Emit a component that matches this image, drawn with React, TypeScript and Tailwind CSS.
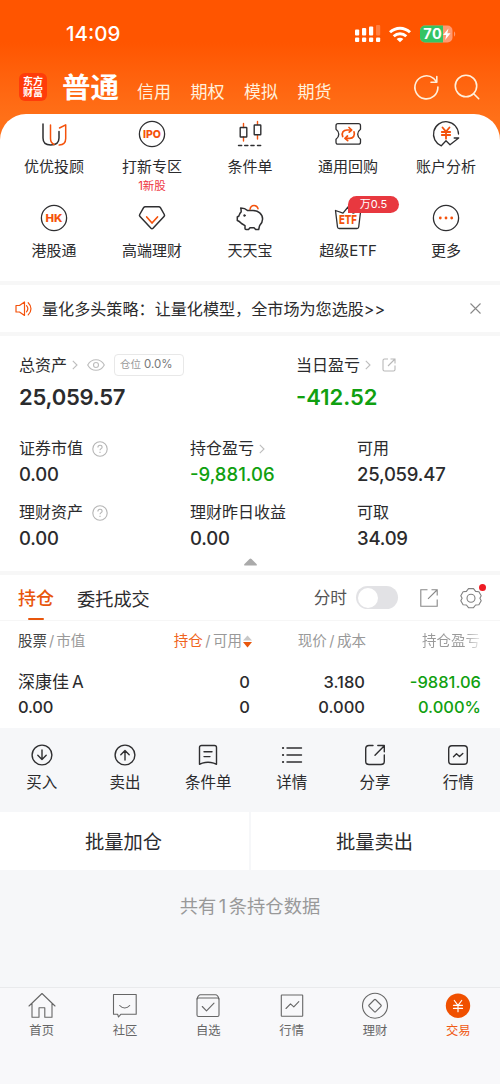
import type { ReactNode } from 'react'

const ORANGE = '#f4520c'
const DARK = '#2f2f31'

function Icon({ size = 28, sw = 1.3, color = DARK, children }: { size?: number; sw?: number; color?: string; children: ReactNode }) {
  return (
    <svg
      width={size}
      height={size}
      viewBox={`0 0 ${size} ${size}`}
      fill="none"
      stroke={color}
      strokeWidth={sw}
      strokeLinecap="round"
      strokeLinejoin="round"
      className="shrink-0 overflow-visible"
    >
      {children}
    </svg>
  )
}

function Chevron() {
  return (
    <svg width="6" height="10" viewBox="0 0 6 10" fill="none" stroke="#bdbdbd" strokeWidth="1.1" className="shrink-0">
      <path d="M.8 .8 5 5 .8 9.2" />
    </svg>
  )
}

function Help() {
  return (
    <svg width="16" height="16" viewBox="0 0 16 16" fill="none" stroke="#b5b5b5" strokeWidth="1.1" className="shrink-0">
      <circle cx="8" cy="8" r="7.2" />
      <path d="M5.9 6.4c0-1.3.9-2.1 2.1-2.1s2.1.8 2.1 1.9c0 1.4-2.1 1.5-2.1 3.1M8 10.7v1.2" />
    </svg>
  )
}

const glyph = { fontFamily: 'Inter, sans-serif', textAnchor: 'middle' as const, fill: ORANGE, stroke: 'none' }

const shortcuts = [
  {
    label: '优优投顾',
    icon: (
      <Icon sw={1.5}>
        <path d="M3 4v14c0 4.500 2.700 7 7.700 7 5 0 8.300-2.500 8.300-7v-6.500" />
        <path d="M10.500 5v13.500c0 3 1.300 4.800 3.500 6M19.500 8l6.200-3.200V18.500c0 4-2.600 6.300-6.500 6.600" stroke={ORANGE} />
      </Icon>
    ),
  },
  {
    label: '打新专区',
    note: '1新股',
    icon: (
      <Icon>
        <circle cx="14" cy="14" r="12.600" />
        <text x="14" y="18" fontSize="11" fontWeight="800" textLength="18" lengthAdjust="spacingAndGlyphs" {...glyph}>IPO</text>
      </Icon>
    ),
  },
  {
    label: '条件单',
    icon: (
      <Icon sw={1.4}>
        <path d="M7.500 3.500v4M7.500 17v4M21.500 1.500v3M21.500 15v4" stroke={ORANGE} />
        <rect x="4.200" y="7.500" width="6.600" height="9.500" rx=".5" />
        <rect x="18.200" y="5" width="6.600" height="9.800" rx=".5" />
        <path d="M2.500 25.500h3.200M8.700 25.500h3.200M14.900 25.500h3.200M21.500 25.500h3.200" />
      </Icon>
    ),
  },
  {
    label: '通用回购',
    icon: (
      <Icon>
        <path d="M4 3.700h20.500c1.300 0 2 .7 2 2v3.500c-2 1.500-2.800 3-2.800 5s.8 3.500 2.800 5v3c0 1.300-.7 2-2 2H4c-1.300 0-2-.7-2-2v-3c2-1.500 2.800-3 2.800-5S4 10.700 2 9.200V5.700c0-1.300.7-2 2-2Z" />
        <g stroke={ORANGE} strokeWidth="1.700">
          <path d="M8.700 16.500c-1.500-3.700.8-6.500 4.300-6.500h4M20 11.800c1.300 3.700-.8 6.500-4.300 6.500h-4.200" />
          <path d="m15 7.500 2.700 2.500-2.500 2.200M13.500 16l-2.500 2.300 2.700 2.400" />
        </g>
      </Icon>
    ),
  },
  {
    label: '账户分析',
    icon: (
      <Icon>
        <path d="M26.500 14A12.500 12.500 0 1 0 9.300 25.800l4.700-5 4 4L26.700 18h-4.500" />
        <path d="m10.500 7.500 3.500 4.200 3.500-4.200M14 11.700v7M9.800 12h8.400M9.800 15h8.400" stroke={ORANGE} strokeWidth="1.800" />
      </Icon>
    ),
  },
  {
    label: '港股通',
    icon: (
      <Icon>
        <circle cx="14" cy="14" r="12.600" />
        <text x="14" y="18" fontSize="11" fontWeight="800" textLength="17" lengthAdjust="spacingAndGlyphs" {...glyph}>HK</text>
      </Icon>
    ),
  },
  {
    label: '高端理财',
    icon: (
      <Icon sw={1.500}>
        <path d="M7.300 2.800h13.400c.7 0 1.300.3 1.700.9l3.900 6.800c.4.700.3 1.400-.3 2L15 24.300c-.6.6-1.400.6-2 0L2 12.500c-.6-.6-.7-1.300-.3-2l3.900-6.800c.4-.6 1-.9 1.700-.9Z" />
        <path d="m8.700 13 5.300 6 5.500-6" stroke={ORANGE} strokeWidth="1.700" />
      </Icon>
    ),
  },
  {
    label: '天天宝',
    icon: (
      <Icon sw={1.500}>
        <path d="M11.500 6.500C9.500 4.500 7.200 4 4.700 4c.5 1.300.4 2.500.5 3.800C3.700 9 3.400 10.500 2.900 12L1.300 13v3.500c1.700.5 2.800 1.500 4.200 3L9 21.700V24.500c0 .7.400 1 1 1h2.500l1.500-1.800h4l1.700 1.800h3c.5-1.500.5-3 1-4 1.800-2 2.900-4 2.900-6.500 0-5-4.400-8.500-9.600-8.500Z" />
        <path d="M14 5.500C14.500 2.300 16.300 1.500 18 1.500c2 0 3.600 1.200 4 3.200" stroke={ORANGE} />
        <circle cx="8.500" cy="11.500" r="1" fill={DARK} strokeWidth=".5" />
      </Icon>
    ),
  },
  {
    label: '超级ETF',
    badge: '万0.5',
    icon: (
      <Icon>
        <path d="m1.500 6.500 7.500 2.700L14 3l5 6.200 7.700-2.700-2 16.500c-.1 1-.7 1.500-1.700 1.500H5.200c-1 0-1.600-.5-1.700-1.500Z" />
        <text x="14" y="20.300" fontSize="12" fontWeight="800" textLength="18" lengthAdjust="spacingAndGlyphs" {...glyph}>ETF</text>
      </Icon>
    ),
  },
  {
    label: '更多',
    icon: (
      <Icon>
        <circle cx="14" cy="14" r="12.600" />
        <g fill={ORANGE} stroke="none">
          <circle cx="8.300" cy="14" r="1.400" />
          <circle cx="14" cy="14" r="1.400" />
          <circle cx="19.700" cy="14" r="1.400" />
        </g>
      </Icon>
    ),
  },
]

const actions = [
  { label: '买入', icon: <><circle cx="11" cy="11" r="9.900" /><path d="M11 6v9.500M6.800 11.300 11 15.500l4.200-4.200" /></> },
  { label: '卖出', icon: <><circle cx="11" cy="11" r="9.900" /><path d="M11 16V6.500M6.800 10.700 11 6.500l4.200 4.200" /></> },
  { label: '条件单', icon: <><path d="M4.500 1.500h13c1.200 0 2 .8 2 2v16.800l-2.800-1.200c-3.700-1.100-7.700-1.100-11.400 0l-2.800 1.200V3.500c0-1.200.8-2 2-2Z" /><path d="M7 7.800h8M7 12.600h6" /></> },
  { label: '详情', icon: <><path d="M6 4h14.500M6 11h14.500M6 18h14.500" /><path d="M2 4h.1M2 11h.1M2 18h.1" strokeWidth="2.200" /></> },
  { label: '分享', icon: <><path d="M9 1.500H5c-2 0-3.300 1.300-3.300 3.300v12.400c0 2 1.300 3.300 3.300 3.300h12c2 0 3.300-1.300 3.300-3.300V11" /><path d="M11 11.300 20.300 1.700M13.800 1.500h6.500V7.700" /></> },
  { label: '行情', icon: <><rect x="1.700" y="1.700" width="18.600" height="18.600" rx="3.200" /><path d="m6.500 12.800 3-3 3 2.700 3.300-3" /></> },
]

const tabs = [
  { label: '首页', icon: <path d="M1 14 14 1.500 27 14M4 11.500V25.300h7v-9.500h5.800v9.500h7.200V11.500" /> },
  { label: '社区', icon: <><path d="M2.500 2.500h22.700v19.800H9.800L7.500 25l-.8-2.700H2.500Z" /><path d="M8.700 13.500c3 3.300 7 3.300 10 0" /></> },
  { label: '自选', icon: <><rect x="3" y="6" width="22" height="18.500" rx="1.500" /><path d="M3 7c.7-2.500 1.800-4.200 3.500-4.200h15c1.700 0 2.800 1.700 3.500 4.200M8.300 14.500l4.200 4.300 7.500-7.700" /></> },
  { label: '行情', icon: <><rect x="3.300" y="3" width="21.400" height="21.200" rx=".5" /><path d="m8 16.500 4.500-4.700 3.300 3.100 5-5.200" /></> },
  { label: '理财', icon: <><circle cx="14" cy="13.700" r="12.500" /><rect x="9.300" y="9" width="9.400" height="9.400" rx="1" transform="rotate(45 14 13.700)" /></> },
  { label: '交易', active: true, icon: <><circle cx="14" cy="13.700" r="12.200" fill="#f05000" stroke="none" /><path d="m10.300 8.500 3.700 4.800 3.700-4.800M14 13.300v6.400M9.500 13.300h9M9.500 16.400h9" stroke="#fff" strokeWidth="1.200" /></> },
]

function StatusBar() {
  return (
    <div className="flex h-[68px] items-center justify-between pr-[46px] pl-[66px] text-white">
      <span className="text-[20.5px] font-medium">14:09</span>
      <div className="flex items-center gap-[9px]">
        <svg width="26" height="18" viewBox="0 0 26 18" fill="#fff" className="mr-[-1px]">
          <rect x="0" y="4.500" width="4.200" height="6" rx="1" />
          <rect x="7" y="3" width="4.200" height="7.500" rx="1" />
          <rect x="14" y="1.500" width="4.200" height="9" rx="1" />
          <rect x="21" y="0" width="4.200" height="10.500" rx="1" opacity=".25" />
          <rect x="0" y="12.500" width="4.200" height="4.500" rx="1" />
          <rect x="7" y="12.500" width="4.200" height="4.500" rx="1" />
          <rect x="14" y="12.500" width="4.200" height="4.500" rx="1" />
          <rect x="21" y="12.500" width="4.200" height="4.500" rx="1" />
        </svg>
        <svg width="22" height="17" viewBox="0 0 22 17" fill="none" stroke="#fff" strokeWidth="2.900">
          <path d="M1 6.300c5.800-5.500 14.200-5.500 20 0M4.700 10.300c3.700-3.400 8.900-3.400 12.600 0" />
          <path d="M11 16.300 7.600 13c2-1.800 4.800-1.800 6.800 0Z" fill="#fff" stroke="none" />
        </svg>
        <svg width="36" height="18" viewBox="0 0 36 18" className="-mr-[2px]">
          <rect x="0" y=".5" width="32.500" height="17" rx="5" fill="#ff9a72" />
          <path d="M5 .5h18v17H5a5 5 0 0 1-5-5v-7a5 5 0 0 1 5-5Z" fill="#35c463" />
          <path d="M34 6.500c1.600.5 1.600 4.500 0 5Z" fill="#ff9a72" />
          <text x="3.300" y="14.300" fill="#fff" fontFamily="Inter, sans-serif" fontSize="14.500" fontWeight="700" textLength="18.500">70</text>
          <path d="m28.500 3.500-5.500 6.500h3.200l-1 5 5.300-6.800h-3.200Z" fill="#fff" />
        </svg>
      </div>
    </div>
  )
}

function AccountNav() {
  return (
    <div className="flex h-[46px] items-center pr-5 pl-[19px] text-white">
      <div className="mt-[-8px] flex h-[28px] w-[28px] flex-col items-center justify-center rounded-[6px] bg-[#ff3c0a] text-[10px] leading-[11px] font-bold">
        <span>东方</span>
        <span>财富</span>
      </div>
      <span className="mt-[-6px] ml-[15px] text-[28.500px] leading-[36px] font-bold">普通</span>
      <div className="mt-[2px] ml-[18px] flex gap-[19.500px] text-[17px] leading-6 text-[#fff0dc]">
        <span>信用</span>
        <span>期权</span>
        <span>模拟</span>
        <span>期货</span>
      </div>
      <div className="mt-[-8px] ml-auto flex gap-[15px]">
        <Icon size={26} sw={1.600} color="#fff0dc">
          <path d="M24.900 13A11.500 11.500 0 1 1 20.500 4.300L23.500 7.800M23.800 2.500V8.200H18" />
        </Icon>
        <Icon size={26} sw={1.600} color="#fff0dc">
          <circle cx="12" cy="12" r="10.700" />
          <path d="m19.700 19.700 5 5" />
        </Icon>
      </div>
    </div>
  )
}

function Shortcuts() {
  return (
    <div className="grid h-[167px] grid-cols-5 grid-rows-[84px_83px] rounded-t-[26px] bg-white px-[5px]">
      {shortcuts.map((s) => (
        <div key={s.label} className="relative flex flex-col items-center pt-[6px]">
          {s.icon}
          <span className="mt-[7px] text-[15px] leading-6 whitespace-nowrap">{s.label}</span>
          {s.note && <span className="text-[11.500px] leading-[14px] text-[#ee3340]">{s.note}</span>}
          {s.badge && (
            <span className="absolute top-[-2px] left-[49px] flex h-[17px] w-[51px] items-center justify-center rounded-[8.500px] rounded-bl-none bg-[#e8383f] text-[11px] text-white">
              {s.badge}
            </span>
          )}
        </div>
      ))}
    </div>
  )
}

function Notice() {
  return (
    <div className="flex h-[47px] items-center bg-white pr-[19px] pl-[15px]">
      <Icon size={18} sw={1.200} color={ORANGE}>
        <path d="M1 5.500h3.500L9.500 2v13.500l-5-3.500H1Z" />
        <path d="M11.500 5.700c1.600 1.800 1.600 4.300 0 6.100M13.200 2.700c3.700 3.500 3.700 8.700 0 12.200" />
      </Icon>
      <span className="mt-[2px] ml-[9px] text-[16.1px] whitespace-nowrap">量化多头策略：让量化模型，全市场为您选股&gt;&gt;</span>
      <svg width="11" height="11" viewBox="0 0 11 11" fill="none" stroke="#888" strokeWidth="1.100" className="ml-auto">
        <path d="m.5 .5 10 10M10.500 .5l-10 10" />
      </svg>
    </div>
  )
}

function Stat({ label, value, help, more, down }: { label: string; value: string; help?: boolean; more?: boolean; down?: boolean }) {
  return (
    <div className="h-16">
      <div className="flex h-[25px] items-center text-[16px] leading-[25px] whitespace-nowrap">
        {label}
        {help && <span className="ml-[9px]"><Help /></span>}
        {more && <span className="ml-[5px]"><Chevron /></span>}
      </div>
      <div className={down ? 'text-[18.500px] leading-[27px] font-medium text-[#10a010]' : 'text-[18.500px] leading-[27px] font-medium tracking-[-0.2px]'}>
        {value}
      </div>
    </div>
  )
}

function Assets() {
  return (
    <div className="flex h-[235px] flex-col bg-white pt-4 pl-[19px]">
      <div className="flex h-[84px]">
        <div className="w-[277px]">
          <div className="flex h-[26px] items-center text-[16px]">
            总资产
            <span className="ml-[5px]"><Chevron /></span>
            <svg width="18" height="12" viewBox="0 0 18 12" fill="none" stroke="#bcbcbc" strokeWidth="1.100" className="ml-[9px]">
              <path d="M.7 6C4.500-1 13.500-1 17.300 6 13.500 13 4.500 13 .7 6Z" />
              <circle cx="9" cy="6" r="2.500" />
            </svg>
            <span className="ml-[9px] flex h-[22px] w-[70px] items-center rounded-[4px] border border-[#e8e8e8] pl-[5px] text-[11.500px] whitespace-nowrap text-[#777]">
              <span className="mr-[3px] text-[10.500px] text-[#999]">仓位</span>0.0%
            </span>
          </div>
          <div className="mt-[5px] text-[22px] leading-[28px] font-semibold tracking-[-0.25px]">25,059.57</div>
        </div>
        <div>
          <div className="flex h-[26px] items-center text-[16px]">
            当日盈亏
            <span className="ml-[5px]"><Chevron /></span>
            <svg width="14" height="14" viewBox="0 0 14 14" fill="none" stroke="#b8b8b8" strokeWidth="1.100" className="ml-[11px]">
              <path d="M6 1H2.500Q1 1 1 2.500v9Q1 13 2.500 13h9q1.500 0 1.500-1.500V7.500M6 8l6.500-6.500M8.500 1H13v4.500" />
            </svg>
          </div>
          <div className="mt-[5px] text-[22px] leading-[28px] font-semibold text-[#10a010]">-412.52</div>
        </div>
      </div>
      <div className="grid grid-cols-[171px_167px_1fr]">
        <Stat label="证券市值" value="0.00" help />
        <Stat label="持仓盈亏" value="-9,881.06" more down />
        <Stat label="可用" value="25,059.47" />
        <Stat label="理财资产" value="0.00" help />
        <Stat label="理财昨日收益" value="0.00" />
        <Stat label="可取" value="34.09" />
      </div>
      <svg width="13" height="8" viewBox="0 0 13 8" className="mt-[-6px] ml-[225px]">
        <path d="M5.500 1q1-1 2 0l5 5q1 1.500-.5 1.500H1Q-.5 7.500.5 6Z" fill="#aaa" />
      </svg>
    </div>
  )
}

function Holdings() {
  return (
    <div className="bg-white">
      <div className="flex h-[46px] border-b border-[#f6f6f6] pl-[18px]">
        <div className="flex w-9 flex-col items-center text-[18px] font-medium text-[#e8560c]">
          <span className="mt-[10px] leading-[28px]">持仓</span>
          <span className="mt-[4.500px] h-[3px] w-4 rounded-full bg-[#e8560c]" />
        </div>
        <span className="mt-[10px] ml-[23px] text-[18.200px] leading-[28px]">委托成交</span>
        <div className="mr-[18px] ml-auto flex items-center">
          <span className="mt-[3px] text-[16.700px] text-[#555]">分时</span>
          <span className="ml-[9px] flex h-[23px] w-[42px] items-center rounded-full bg-[#e2e2e5] pl-[1.500px]">
            <span className="h-5 w-5 rounded-full bg-white" />
          </span>
          <svg width="18" height="18" viewBox="0 0 18 18" fill="none" stroke="#888" strokeWidth="1.100" className="ml-[22px]">
            <path d="M7.500 .8H.8v16.400h16.400V10.500M8 9.800 17 1M11.500 .8h5.700v5.700" />
          </svg>
          <div className="relative ml-[22px]">
            <Icon size={22} sw={1.100} color="#808080">
              <path d="M8.500 1.600h5L15.600 4.400l3.300.3 2.300 4-1.300 2.500 1.300 2.500-2.300 4-3.300.3-2.100 2.700h-5L6.400 18l-3.300-.3-2.300-4 1.300-2.500-1.300-2.500 2.300-4 3.300-.3Z" />
              <circle cx="11" cy="11.200" r="4" />
            </Icon>
            <span className="absolute top-[-3px] right-[-4px] h-[7px] w-[7px] rounded-full bg-[#ee1c24]" />
          </div>
        </div>
      </div>
      <div className="grid h-[38px] grid-cols-[132px_101px_115px_115px] items-center pt-[2px] pl-[18px] text-[14.500px] whitespace-nowrap text-[#999]">
        <span><span className="text-[#444]">股票</span><span className="mx-[2px]">/</span>市值</span>
        <span className="flex items-center justify-end">
          <span className="text-[#f0641e]">持仓</span><span className="mx-[2.500px]">/</span>可用
          <svg width="9" height="13" viewBox="0 0 9 13" className="mr-[-1px] ml-[1px]">
            <path d="M4.500 .5 9 5.500H0Z" fill="#c8c8c8" />
            <path d="M0 7h9l-4.500 5.500Z" fill="#e8560c" />
          </svg>
        </span>
        <span className="text-right">现价<span className="mx-[2.500px]">/</span>成本</span>
        <span className="bg-gradient-to-r from-[#999] from-85% to-[#eee] bg-clip-text pl-[56px] text-transparent">持仓盈亏</span>
      </div>
      <div className="grid h-[69px] grid-cols-[132px_100px_115px_116px] content-start pt-[11px] pl-[18px] text-right text-[16.500px] leading-[25px] font-medium">
        <span className="text-left text-[17px] font-normal">深康佳<span className="ml-[3px]">A</span></span>
        <span>0</span>
        <span>3.180</span>
        <span className="text-[#10a010]">-9881.06</span>
        <span className="text-left tracking-[-0.2px]">0.00</span>
        <span>0</span>
        <span>0.000</span>
        <span className="text-[#10a010]">0.000%</span>
      </div>
    </div>
  )
}

export default function App() {
  return (
    <div className="flex h-[1084px] w-[500px] flex-col overflow-hidden bg-[#f6f7f9] font-['Inter','Noto_Sans_CJK_SC',sans-serif] text-[#2b2b2d]">
      <div className="bg-linear-to-b from-[#ff5500] from-15% to-[#ff7018] to-42%">
        <StatusBar />
        <AccountNav />
        <Shortcuts />
      </div>
      <div className="flex flex-col gap-1 bg-[#f7f7f7] pt-1">
        <Notice />
        <Assets />
        <Holdings />
      </div>

      {/* Position actions */}
      <div className="grid h-[84px] grid-cols-6 pt-4">
        {actions.map((a) => (
          <div key={a.label} className="flex flex-col items-center">
            <Icon size={22} sw={1.400}>{a.icon}</Icon>
            <span className="mt-1 text-[15.500px] leading-[25px]">{a.label}</span>
          </div>
        ))}
      </div>
      <div className="grid h-[58px] grid-cols-2 gap-[2px] text-[19.300px]">
        <div className="flex items-center justify-center bg-white pt-[3px] pr-[2px]">批量加仓</div>
        <div className="flex items-center justify-center bg-white pt-[3px] pr-[2px]">批量卖出</div>
      </div>
      <p className="mt-[22px] text-center text-[18.300px] leading-[28px] text-[#999]">共有<span className="mx-[2.500px]">1</span>条持仓数据</p>

      {/* Bottom tab bar */}
      <div className="mt-auto grid h-[97px] grid-cols-6 border-t border-[#e9eaec] bg-[#f8f8fa] pt-1">
        {tabs.map((t) => (
          <div key={t.label} className="flex flex-col items-center">
            <Icon sw={1.100} color="#666">{t.icon}</Icon>
            <span className={t.active ? 'mt-px text-[12.300px] leading-5 text-[#f05a14]' : 'mt-px text-[12.300px] leading-5 text-[#666]'}>
              {t.label}
            </span>
          </div>
        ))}
      </div>
    </div>
  )
}
